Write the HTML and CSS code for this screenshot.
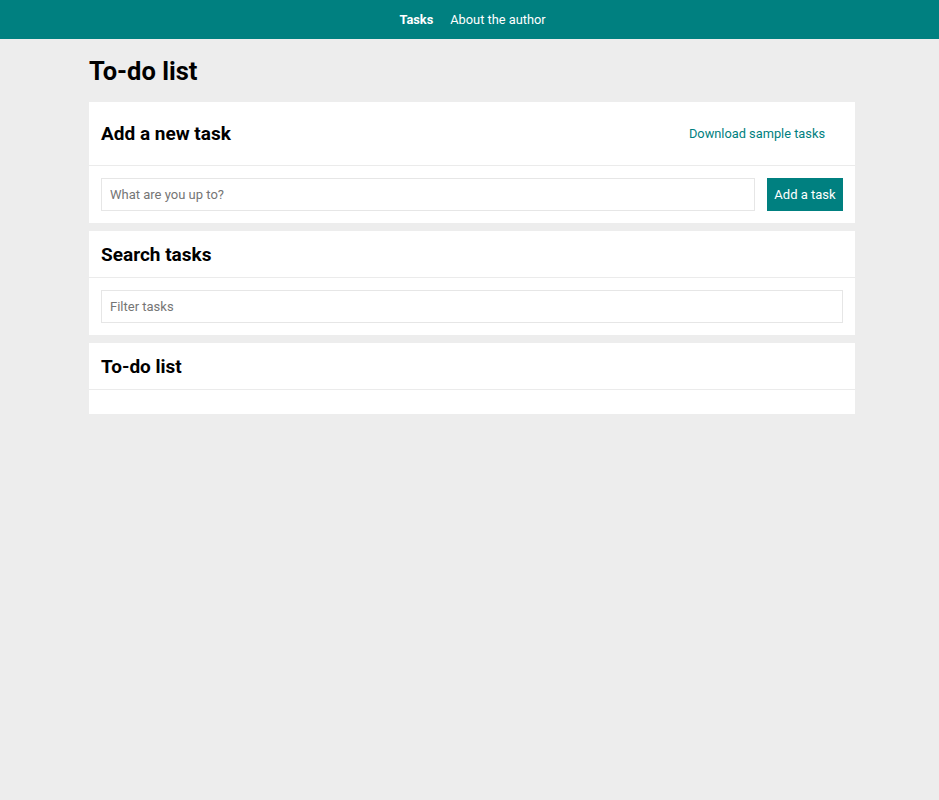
FILE: index.html
```html
<!DOCTYPE html>
<html>
<head>
<meta charset="utf-8">
<link rel="stylesheet" href="styles.css">
</head>
<body>
<nav class="nav">
  <a class="nav-link active" href="#">Tasks</a>
  <a class="nav-link" href="#">About the author</a>
</nav>
<main class="container">
  <h1 class="title">To-do list</h1>
  <section class="card">
    <div class="card-head card-head-split">
      <h2 class="card-title">Add a new task</h2>
      <button class="link-btn">Download sample tasks</button>
    </div>
    <div class="card-body row">
      <input class="field" type="text" placeholder="What are you up to?">
      <button class="primary-btn">Add a task</button>
    </div>
  </section>
  <section class="card">
    <div class="card-head">
      <h2 class="card-title">Search tasks</h2>
    </div>
    <div class="card-body">
      <input class="field" type="text" placeholder="Filter tasks">
    </div>
  </section>
  <section class="card">
    <div class="card-head">
      <h2 class="card-title">To-do list</h2>
    </div>
    <div class="card-body empty"></div>
  </section>
</main>
</body>
</html>
```

FILE: styles.css
```css
* { box-sizing: border-box; }
html, body {
  margin: 0;
  padding: 0;
  background: #ededed;
  font-family: Roboto, "Liberation Sans", sans-serif;
  color: #000;
}
.nav {
  height: 39px;
  background: #008080;
  display: flex;
  justify-content: center;
  align-items: center;
  gap: 17px;
  padding-left: 6px;
}
.nav-link {
  color: #fff;
  text-decoration: none;
  font-size: 12.8px;
}
.nav-link.active { font-weight: bold; }
.container {
  width: 771px;
  padding-left: 5px;
  margin: 0 auto;
  display: flex;
  flex-direction: column;
  gap: 8px;
  padding-bottom: 20px;
}
.title {
  font-size: 25.5px;
  font-weight: bold;
  margin: 17px 0 8px;
  line-height: 30px;
}
.card {
  background: #fff;
}
.card-head {
  padding: 13px 12px 11px;
  border-bottom: 1px solid #ebebeb;
}
.card-head-split {
  display: flex;
  justify-content: space-between;
  align-items: center;
  padding-top: 13px;
  padding-bottom: 12px;
}
.card-title {
  margin: 0;
  font-size: 19px;
  line-height: 22px;
  font-weight: bold;
}
.link-btn {
  background: none;
  border: none;
  color: #008080;
  font-family: inherit;
  font-size: 12.8px;
  padding: 10px 18px;
  line-height: 18px;
  cursor: pointer;
}
.card-body {
  padding: 12px;
}
.card-body.empty { height: 24px; }
.row {
  display: flex;
  gap: 12px;
}
.field {
  flex: 1;
  display: block;
  width: 100%;
  height: 33px;
  border: 1px solid #e6e6e6;
  padding: 0 8px;
  font-family: inherit;
  font-size: 13px;
  color: #333;
  outline: none;
}
.field::placeholder { color: #757575; }
.primary-btn {
  height: 33px;
  width: 76px;
  background: #008080;
  color: #fff;
  border: none;
  font-family: inherit;
  font-size: 13px;
  padding: 0;
  cursor: pointer;
}
```
